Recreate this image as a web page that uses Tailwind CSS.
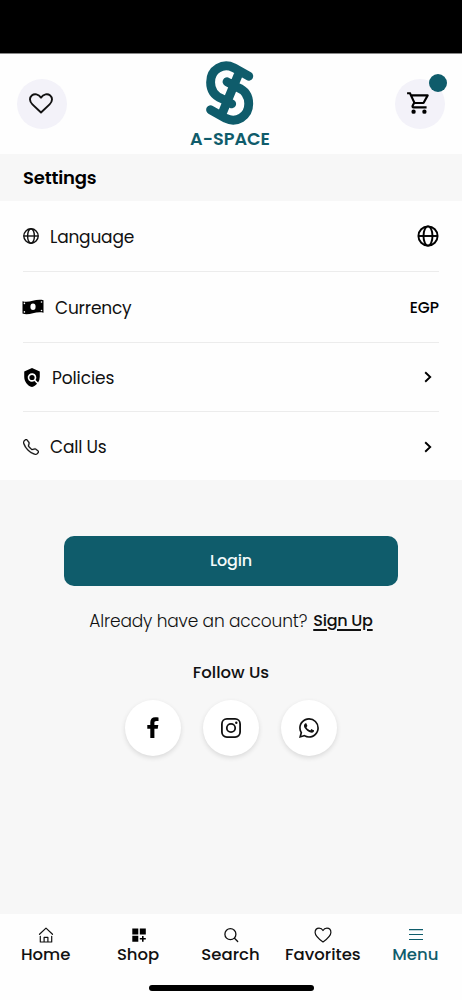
<!DOCTYPE html>
<html lang="en">
<head>
<meta charset="utf-8">
<title>A-SPACE Settings</title>
<script src="https://cdn.jsdelivr.net/npm/@tailwindcss/browser@4"></script>
</head>
<body class="w-[462px] h-[1000px] flex flex-col overflow-hidden bg-[#f7f7f7] text-[#111] font-[Poppins,Inter,sans-serif]">
<div class="h-[53px] shrink-0 bg-black"></div>
<header class="h-[101px] shrink-0 bg-[#fefefe] flex justify-between pl-[17px] pr-[17px] border-t border-[#888]">
  <button class="mt-[25px] size-[50px] rounded-full bg-[#f3f2f9] flex items-center justify-center">
    <svg class="w-6 h-[21px] -translate-x-px -translate-y-px" viewBox="0 0 24 21" fill="none" stroke="#111" stroke-width="1.900" stroke-linejoin="round"><path d="M12 19.500 3.400 11.400C.2 8.300.4 4.500 2.800 2.500 5.400.4 9.500 1 12 4.600c2.500-3.600 6.600-4.200 9.200-2.100 2.400 2 2.600 5.800-.6 8.900z"/></svg>
  </button>
  <div class="flex flex-col items-center pt-[7px]">
    <svg class="w-12 h-16 -translate-x-px" viewBox="108 33 146 194" fill="none" stroke="#0f5c6b" stroke-width="27" stroke-linecap="round" stroke-linejoin="round"><path d="M238 79 192 53C160 37 122 58 122 97c0 28 14 42 34 50l30 16M122 181l46 26c32 16 70-5 70-44 0-28-14-42-34-50l-32-17M208 70l-49 118"/></svg>
    <svg class="w-[86px] h-6 mt-[3px] -translate-x-px" viewBox="0 0 86 24"><text x="3" y="17.400" textLength="80" lengthAdjust="spacingAndGlyphs" fill="#0f5c6b" class="text-[17.500px] font-semibold">A-SPACE</text></svg>
  </div>
  <button class="relative mt-[25px] size-[50px] rounded-full bg-[#f3f2f9] flex items-center justify-center">
    <svg class="size-[26px] -translate-x-px -translate-y-px" viewBox="0 0 24 24" fill="#000"><path d="M15.550 13c.75 0 1.410-.41 1.750-1.030l3.580-6.490A.996.996 0 0 0 20.010 4H5.210l-.94-2H1v2h2l3.600 7.590-1.350 2.440C4.520 15.370 5.480 17 7 17h12v-2H7l1.100-2h7.450zM6.160 6h12.150l-2.760 5H8.530L6.160 6zM7 18a2 2 0 1 0 0 4 2 2 0 0 0 0-4zm10 0a2 2 0 1 0 0 4 2 2 0 0 0 0-4z"/></svg>
    <span class="absolute left-[34px] -top-[5px] size-[18px] rounded-full bg-[#0f5c6b]"></span>
  </button>
</header>
<h1 class="h-[47px] shrink-0 flex items-center pl-[23px] text-[18px] font-semibold text-black"><span class="tracking-[-0.2px]">Settings</span></h1>
<main class="h-[279px] shrink-0 bg-[#fefefe] px-[23px] flex flex-col text-[17px] tracking-[-0.200px]">
  <div class="h-[71px] shrink-0 flex items-center border-b border-[#ececec]">
    <svg class="size-4" viewBox="0 0 16 16" fill="none" stroke="#111" stroke-width="1.400"><circle cx="8" cy="8" r="7.200"/><ellipse cx="8" cy="8" rx="3.400" ry="7.200"/><path d="M.7 8h14.600"/></svg>
    <span class="ml-[11px] pt-[3px]">Language</span>
    <svg class="ml-auto size-[22px]" viewBox="0 0 22 22" fill="none" stroke="#000" stroke-width="1.900"><circle cx="11" cy="11" r="9.600"/><ellipse cx="11" cy="11" rx="4.500" ry="9.600"/><path d="M1.400 11h19.200"/></svg>
  </div>
  <div class="h-[71px] shrink-0 flex items-center border-b border-[#ececec]">
    <svg class="w-[22px] h-4 -ml-px" viewBox="0 0 21 16"><path d="M0 2.300C7 4.500 13-.8 21 1.200v12.500C13 11.700 7 17 0 14.600z" fill="#000"/><g fill="#fefefe"><ellipse cx="10.500" cy="7.800" rx="2.600" ry="3.200"/><circle cx="1.900" cy="4.400" r=".8"/><circle cx="19" cy="3" r=".8"/><circle cx="1.900" cy="12.900" r=".8"/><circle cx="19" cy="11.500" r=".8"/></g></svg>
    <span class="ml-[11px] pt-[3px]">Currency</span>
    <span class="ml-auto pt-[1px] text-[15.500px] font-medium text-black tracking-normal">EGP</span>
  </div>
  <div class="h-[69px] shrink-0 flex items-center border-b border-[#ececec] pt-px">
    <svg class="w-[18px] h-[19px]" viewBox="3 1 18 22" fill="#000"><path d="M21 5l-9-4-9 4v6c0 5.550 3.840 10.740 9 12 2.300-.56 4.330-1.900 5.880-3.710l-3.120-3.120a4.994 4.994 0 1 1 1.410-1.410l2.900 2.900A12.300 12.300 0 0 0 21 11V5z"/><circle cx="12" cy="12" r="3"/></svg>
    <span class="ml-[11px] pt-[2px] tracking-[-0.100px]">Policies</span>
    <svg class="ml-auto mr-[7px] w-2 h-3 -translate-y-px" viewBox="0 0 8 12" fill="none" stroke="#000" stroke-width="1.900"><path d="m1.200 1.200 5 4.800-5 4.800"/></svg>
  </div>
  <div class="h-[68px] shrink-0 flex items-center pt-[2px]">
    <svg class="size-4" viewBox="0 0 16 16" fill="#111" stroke="#111" stroke-width=".3"><path d="M3.654 1.328a.678.678 0 0 0-1.015-.063L1.605 2.300c-.483.484-.661 1.169-.45 1.770a17.600 17.600 0 0 0 4.168 6.608 17.600 17.600 0 0 0 6.608 4.168c.601.211 1.286.033 1.770-.45l1.034-1.034a.678.678 0 0 0-.063-1.015l-2.307-1.794a.68.68 0 0 0-.58-.122l-2.190.547a1.750 1.750 0 0 1-1.657-.459L5.482 8.062a1.750 1.750 0 0 1-.46-1.657l.548-2.190a.68.68 0 0 0-.122-.58zM1.884.511a1.745 1.745 0 0 1 2.612.163L6.290 2.980c.329.423.445.974.315 1.494l-.547 2.190a.68.68 0 0 0 .178.643l2.457 2.457a.68.68 0 0 0 .644.178l2.189-.547a1.750 1.750 0 0 1 1.494.315l2.306 1.794c.829.645.905 1.870.163 2.611l-1.034 1.034c-.74.74-1.846 1.065-2.877.702a18.600 18.600 0 0 1-7.010-4.420 18.600 18.600 0 0 1-4.420-7.009c-.362-1.030-.037-2.137.703-2.877z"/></svg>
    <span class="ml-[11px] pt-[2px]">Call Us</span>
    <svg class="ml-auto mr-[7px] w-2 h-3" viewBox="0 0 8 12" fill="none" stroke="#000" stroke-width="1.900"><path d="m1.200 1.200 5 4.800-5 4.800"/></svg>
  </div>
</main>
<section class="flex-1 flex flex-col items-center pt-14">
  <button class="w-[334px] h-[50px] rounded-[10px] bg-[#0f5c6b] text-[#f4fafa] text-[16px] font-medium tracking-[-0.200px]">Login</button>
  <p class="mt-[23px] h-6 leading-6 flex gap-[6px] text-[17px] whitespace-nowrap"><span class="font-light tracking-[-0.160px]">Already have an account?</span><a class="text-[16px] font-medium tracking-[-0.250px] underline underline-offset-[3px] decoration-[1.500px]">Sign Up</a></p>
  <h2 class="mt-[28px] h-6 leading-6 text-[16.500px] font-medium">Follow Us</h2>
  <div class="mt-[15px] flex gap-[22px]">
    <a class="size-14 rounded-full bg-white shadow-[0_2px_5px_rgba(0,0,0,0.12)] flex items-center justify-center"><svg class="w-3 h-[21px] -translate-y-px" viewBox="0 0 12 21"><path d="M3.300 21V11.700H.3V8h3V5.300C3.300 2 5.200.2 8.200.2c1.400 0 2.900.2 3.300.3v3.400H9.500C7.800 3.900 7.400 4.700 7.400 5.700V8h3.900l-.6 3.700H7.400V21z"/></svg></a>
    <a class="size-14 rounded-full bg-white shadow-[0_2px_5px_rgba(0,0,0,0.12)] flex items-center justify-center"><svg class="size-5" viewBox="0 0 20 20" fill="none" stroke="#111" stroke-width="1.800"><rect x=".9" y=".9" width="18.200" height="18.200" rx="5"/><circle cx="10" cy="10" r="4.200"/><circle cx="15.300" cy="4.700" r="1.200" fill="#111" stroke="none"/></svg></a>
    <a class="size-14 rounded-full bg-white shadow-[0_2px_5px_rgba(0,0,0,0.12)] flex items-center justify-center"><svg class="size-5" viewBox="0 0 16 16" fill="#111"><path d="M13.601 2.326A7.850 7.850 0 0 0 7.994 0C3.627 0 .068 3.558.064 7.926c0 1.399.366 2.760 1.057 3.965L0 16l4.204-1.102a7.900 7.900 0 0 0 3.790.965h.004c4.368 0 7.926-3.558 7.930-7.930A7.900 7.900 0 0 0 13.600 2.326zM7.994 14.521a6.600 6.600 0 0 1-3.356-.92l-.24-.144-2.494.654.666-2.433-.156-.251a6.560 6.560 0 0 1-1.007-3.505c0-3.626 2.957-6.584 6.591-6.584a6.560 6.560 0 0 1 4.660 1.931 6.560 6.560 0 0 1 1.928 4.660c-.004 3.639-2.961 6.592-6.592 6.592m3.615-4.934c-.197-.099-1.170-.578-1.353-.646-.182-.065-.315-.099-.445.099-.133.197-.513.646-.627.775-.114.133-.232.148-.43.050-.197-.1-.836-.308-1.592-.985-.59-.525-.985-1.175-1.103-1.372-.114-.198-.011-.304.088-.403.087-.088.197-.232.296-.346.100-.114.133-.198.198-.33.065-.134.034-.248-.015-.347-.05-.099-.445-1.076-.612-1.470-.16-.389-.323-.335-.445-.34-.114-.007-.247-.007-.38-.007a.73.73 0 0 0-.529.247c-.182.198-.691.677-.691 1.654s.710 1.916.810 2.049c.098.133 1.394 2.132 3.383 2.992.47.205.840.326 1.129.418.475.152.904.129 1.246.080.380-.058 1.171-.48 1.338-.943.164-.464.164-.86.114-.943-.049-.084-.182-.133-.38-.232"/></svg></a>
  </div>
</section>
<footer class="h-[86px] shrink-0 bg-[#fefefe] flex flex-col items-center">
  <nav class="w-full h-[71px] grid grid-cols-5 text-[16.500px] leading-6 font-medium text-center text-[#111]">
    <div class="flex flex-col items-center pt-[13px]"><svg class="size-4" viewBox="0 0 16 16" fill="none" stroke="#111" stroke-width="1.200" stroke-linecap="round" stroke-linejoin="round"><path d="M1.500 7.300 8 1.100l6.500 6.200M2.300 9.300v5.700h11.400V9.300M6.100 15v-4.600h3.800V15"/></svg><span class="pr-px">Home</span></div>
    <div class="flex flex-col items-center pt-[13px]"><svg class="size-4" viewBox="0 0 16 16" fill="#000"><path d="M1.300 1.500h6v6h-6zM8.800 1.500h6v6h-6zM1.300 8.800h6v6h-6zM11 8.900h1.600v2.200h2.200v1.500h-2.200v2.200H11v-2.200H8.800v-1.500H11z"/></svg><span class="pr-px">Shop</span></div>
    <div class="flex flex-col items-center pt-[13px]"><svg class="size-4" viewBox="0 0 16 16" fill="none" stroke="#111" stroke-width="1.300" stroke-linecap="round"><circle cx="7.400" cy="7.200" r="5.500"/><path d="m11.500 11.300 3.200 3.200"/></svg><span class="pr-px">Search</span></div>
    <div class="flex flex-col items-center pt-[13px]"><svg class="w-[18px] h-4" viewBox="0 0 18 16" fill="none" stroke="#111" stroke-width="1.200" stroke-linejoin="round"><path d="M9 15C4.700 11.800 1.100 8.800 1.100 5.400c0-2.600 1.700-4.300 4-4.300C6.800 1.100 8.200 2 9 3.500c.8-1.500 2.200-2.400 3.900-2.400 2.300 0 4 1.700 4 4.300C16.900 8.800 13.300 11.800 9 15z"/></svg><span class="pr-px">Favorites</span></div>
    <div class="flex flex-col items-center pt-[13px] text-[#0f5c6b]"><svg class="size-4" viewBox="0 0 16 16" fill="none" stroke="currentColor" stroke-width="1.200"><path d="M1 2.700h14M1 7.500h14M1 12.500h14"/></svg><span class="pr-px">Menu</span></div>
  </nav>
  <div class="w-[165px] h-[6px] rounded-full bg-black"></div>
</footer>
</body>
</html>
